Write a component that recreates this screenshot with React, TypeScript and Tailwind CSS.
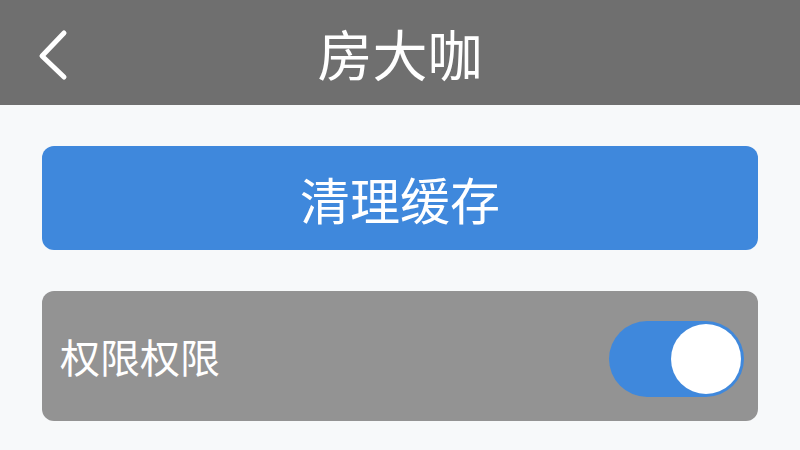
const font = { fontFamily: '"Noto Sans CJK SC", "Noto Sans", sans-serif' };

function BackArrow() {
  return (
    <svg width="34" height="52" viewBox="0 0 34 52" fill="none">
      <polyline
        points="28,4 6,27 28,48"
        stroke="white"
        strokeWidth="5"
        strokeLinecap="round"
        strokeLinejoin="round"
      />
    </svg>
  );
}

export default function App() {
  return (
    <div className="flex h-[450px] w-[800px] flex-col overflow-hidden bg-[#f7f9fa]" style={font}>
      <header className="relative flex h-[105px] shrink-0 items-center justify-center bg-[#6f6f6f]">
        <button className="absolute left-[36px] top-[29px]">
          <BackArrow />
        </button>
        <h1 className="text-[55px] leading-none font-normal text-white">房大咖</h1>
      </header>

      <main className="flex flex-col gap-[41px] px-[42px] pt-[41px]">
        <button className="flex h-[104px] items-center justify-center rounded-[12px] bg-[#3f88dc] text-[50px] leading-none text-white">
          清理缓存
        </button>

        <div className="flex h-[130px] items-center justify-between rounded-[12px] bg-[#939393] pl-[18px] pr-[14px]">
          <span className="text-[40px] leading-none text-white">权限权限</span>
          <div className="mt-[6px] flex h-[76px] w-[135px] items-center justify-end rounded-full bg-[#3f88dc] p-[3px]">
            <div className="h-[70px] w-[70px] rounded-full bg-white" />
          </div>
        </div>
      </main>
    </div>
  );
}
